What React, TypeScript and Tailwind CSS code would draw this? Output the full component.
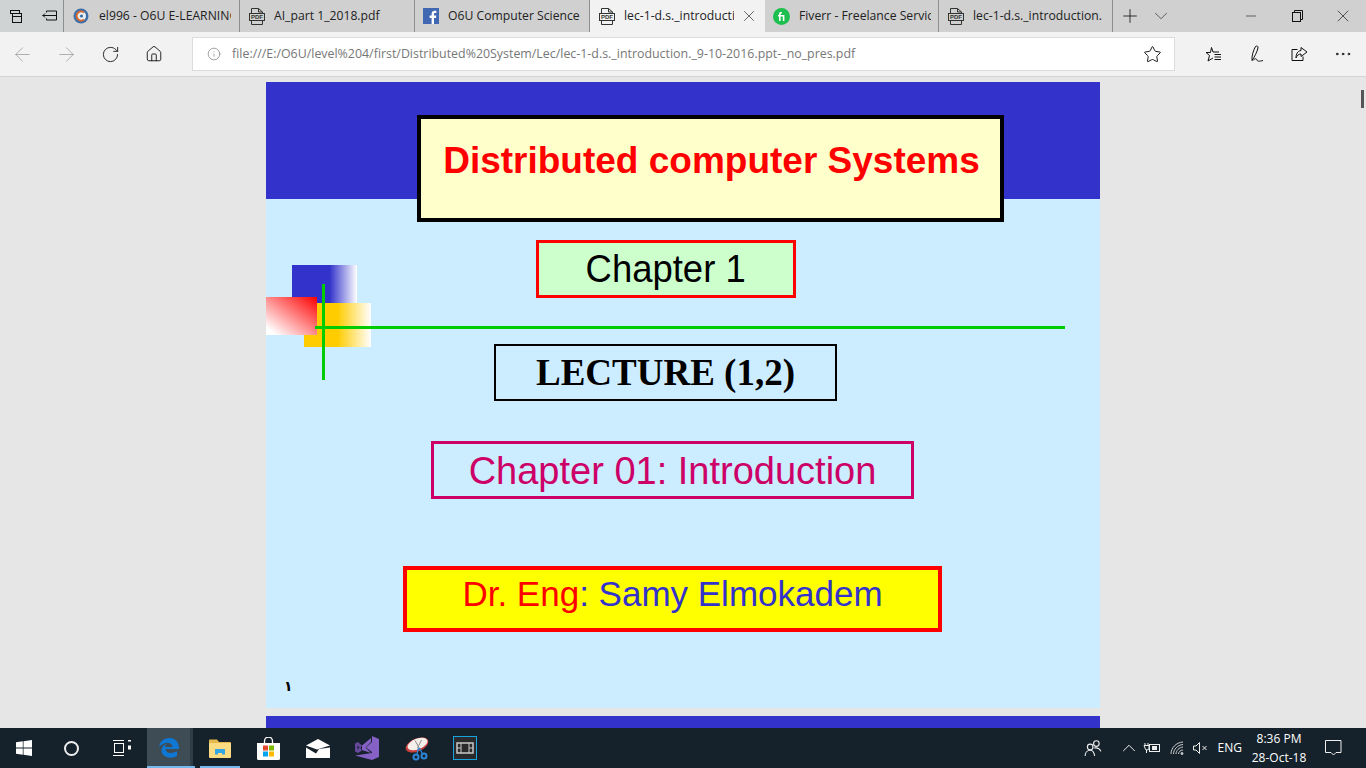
import { ChevronDown, ChevronUp, Home, Info, Minus, MoreHorizontal, Plus, RotateCw, Star, X, ArrowLeft, ArrowRight } from 'lucide-react';

const UI_FONT = "font-['Open_Sans','Noto_Sans',sans-serif]";

function PdfIcon() {
  return (
    <svg width="16" height="17" viewBox="0 0 16 17" className="shrink-0" fill="none" stroke="#333" strokeWidth="1">
      <path d="M2.500 5.500V.5h7l4 3.500v1.500M9.500.5V4h4" />
      <path d="M2.500 12.500v4h11v-4" />
      <rect x="0.500" y="5.500" width="15" height="7" />
      <text x="8" y="11" textAnchor="middle" fontSize="6" fontWeight="700" fill="#333" stroke="none" fontFamily="Liberation Sans, sans-serif">PDF</text>
    </svg>
  );
}

function OrbIcon() {
  return (
    <svg width="16" height="16" viewBox="0 0 16 16" className="shrink-0">
      <circle cx="8" cy="8" r="7.500" fill="#3d6ea8" />
      <circle cx="8" cy="8" r="5" fill="#e8eef4" />
      <path d="M11 4.500A4.500 4.500 0 1 0 11 11.500" fill="none" stroke="#d9662b" strokeWidth="2" />
      <circle cx="8.500" cy="8" r="1.600" fill="#3d6ea8" />
    </svg>
  );
}

function FacebookIcon() {
  return (
    <svg width="16" height="16" viewBox="0 0 16 16" className="shrink-0">
      <rect width="16" height="16" fill="#4267b2" />
      <path d="M11 16v-6h2l.3-2.400H11V6.200c0-.7.2-1.200 1.200-1.200h1.200V2.900c-.2 0-1-.1-1.800-.1-1.800 0-3 1.100-3 3.100v1.700h-2V10h2v6z" fill="#fff" />
    </svg>
  );
}

function FiverrIcon() {
  return (
    <svg width="17" height="17" viewBox="0 0 17 17" className="shrink-0">
      <circle cx="8.500" cy="8.500" r="8.500" fill="#1dbf4f" />
      <path d="M5 7h1V5.800C6 4.500 6.800 4 8 4h.8v1.500H8.200c-.4 0-.6.2-.6.500V7h3.800v6H9.800V8.500H7.600V13H6V8.500H5z" fill="#fff" />
    </svg>
  );
}

const TABS = [
  { title: 'el996 - O6U E-LEARNING', icon: <OrbIcon />, w: 'w-[176px]', gap: 'pl-[9px] gap-[10px]' },
  { title: 'AI_part 1_2018.pdf', icon: <PdfIcon />, w: 'w-[175px]', gap: 'pl-[9px] gap-[9px]' },
  { title: 'O6U Computer Science', icon: <FacebookIcon />, w: 'w-[175px]', gap: 'pl-[8px] gap-[9px]' },
  { title: 'lec-1-d.s._introduction._9-10', icon: <PdfIcon />, w: 'w-[175px]', gap: 'pl-[9px] gap-[9px]', active: true },
  { title: 'Fiverr - Freelance Services', icon: <FiverrIcon />, w: 'w-[174px]', gap: 'pl-[8px] gap-[9px]' },
  { title: 'lec-1-d.s._introduction.', icon: <PdfIcon />, w: 'w-[174px]', gap: 'pl-[9px] gap-[9px]' },
];

function TabStrip() {
  return (
    <div className="flex h-[32px] bg-[#d0d0d0]">
      <div className="flex w-[64px] items-center border-r border-[#8e8e8e] bg-[#cfd3d3] pl-[9px] gap-[18px]">
        <svg width="15" height="15" viewBox="0 0 15 15" fill="none" stroke="#111" strokeWidth="1">
          <rect x="1.500" y="1.500" width="9" height="3" />
          <rect x="3.500" y="4.500" width="9" height="3" fill="#cfd3d3" />
          <rect x="3.500" y="7.500" width="9" height="6" fill="#cfd3d3" />
        </svg>
        <svg width="16" height="14" viewBox="0 0 16 14" fill="none" stroke="#111" strokeWidth="1">
          <path d="M4.500 3.500v-1.500h10v9h-10V9.500" />
          <path d="M.5 6.500h7M3 4.500l-2 2 2 2M4.500 6.500h10" />
        </svg>
      </div>
      {TABS.map(t => (
        <div
          key={t.title}
          className={`flex ${t.w} items-center overflow-hidden ${t.gap} ${t.active ? 'bg-[#f2f2f2]' : 'border-r border-[#8e8e8e]'} ${UI_FONT} text-[12.200px] text-[#222]`}
        >
          {t.icon}
          <span className={`${t.active ? 'w-[110px]' : 'w-[132px]'} shrink-0 overflow-hidden whitespace-nowrap`}>{t.title}</span>
          {t.active && <X size={18} strokeWidth={0.900} className="-ml-[3px] shrink-0" />}
        </div>
      ))}
      <div className="flex w-[60px] items-center pl-[6px] gap-[9px]">
        <Plus size={22} strokeWidth={0.900} color="#111" />
        <ChevronDown size={22} strokeWidth={0.800} color="#333" />
      </div>
      <div className="ml-auto flex items-center">
        <div className="flex w-[46px] justify-center"><Minus size={16} strokeWidth={0.900} color="#111" /></div>
        <div className="flex w-[46px] justify-center">
          <svg width="11" height="12" viewBox="0 0 11 12" fill="none" stroke="#111" strokeWidth="1">
            <rect x="0.500" y="2.500" width="8" height="9" />
            <path d="M2.500 2.500v-2h8v9h-2" />
          </svg>
        </div>
        <div className="flex w-[46px] justify-center"><X size={20} strokeWidth={0.800} color="#111" /></div>
      </div>
    </div>
  );
}

function ToolBar() {
  return (
    <div className="flex h-[45px] items-center border-b border-[#d4d4d4] bg-[#f2f2f2]">
      <div className="flex w-[192px] items-center pl-[11px]">
        <ArrowLeft size={23} strokeWidth={0.800} color="#999" />
        <ArrowRight size={23} strokeWidth={0.800} color="#999" className="ml-[21px]" />
        <RotateCw size={19} strokeWidth={1.100} color="#111" className="ml-[23px]" />
        <Home size={18} strokeWidth={1.200} color="#111" className="ml-[25px]" />
      </div>
      <div className={`flex h-[34px] w-[983px] items-center border border-[#dcdcdc] bg-white pl-[14px] ${UI_FONT} text-[12.400px] text-[#777]`}>
        <Info size={14} strokeWidth={1} color="#666" className="shrink-0" />
        <span className="ml-[11px] whitespace-nowrap">file:///E:/O6U/level%204/first/Distributed%20System/Lec/lec-1-d.s._introduction._9-10-2016.ppt-_no_pres.pdf</span>
        <Star size={19} strokeWidth={1.200} color="#111" className="ml-auto mr-[12px] shrink-0" />
      </div>
      <div className="flex flex-1 items-center pl-[30px]">
        <svg width="17" height="17" viewBox="0 0 17 17" fill="none" stroke="#111" strokeWidth="1">
          <path d="M6.500 1.500L8 6h6M1 6.500h4.500l1-5M1 6.500l3.500 3L3 15l5-3" />
          <path d="M9.500 8.500h6.500M9.500 11h6.500M9.500 13.500h6.500" />
        </svg>
        <svg width="17" height="18" viewBox="0 0 17 18" fill="none" stroke="#111" strokeWidth="1" className="ml-[27px]">
          <path d="M6.500 1.500C4.500 5 2.500 11 3 15.500 5.500 12 8 7 9 3 9.500 1 7.500.5 6.500 1.500zM4 15.500c2-2.500 3.500-2 4-.5s2 1.500 6 .5" />
        </svg>
        <svg width="17" height="17" viewBox="0 0 17 17" fill="none" stroke="#111" strokeWidth="1" className="ml-[25px]">
          <path d="M6.500 3.500h-5.500v11h11v-4" />
          <path d="M10 1.500l6 4.500-6 4.500V8C7.500 8 6 9.500 5 12c0-4 1.500-7 5-7.500z" />
        </svg>
        <MoreHorizontal size={20} strokeWidth={1.200} color="#111" className="ml-[25px]" />
      </div>
    </div>
  );
}

function SlideBox({ className, children }: { className: string; children: React.ReactNode }) {
  return <div className={`absolute flex items-center justify-center whitespace-nowrap ${className}`}>{children}</div>;
}

function Slide() {
  return (
    <div className="relative h-[626px] w-[834px] shrink-0 overflow-hidden bg-[#ccecff] font-['Liberation_Sans',sans-serif]">
      <div className="h-[117px] bg-[#3333cc]" />

      <SlideBox className="left-[151px] top-[33px] h-[107px] w-[587px] border-[4px] border-black bg-[#ffffcc] pb-[16px] pl-[2px] text-[37px] font-bold text-[#ff0000]">
        Distributed computer Systems
      </SlideBox>
      <SlideBox className="left-[270px] top-[158px] h-[58px] w-[260px] border-[3px] border-[#ff0000] bg-[#ccffcc] text-[39px] text-black">
        <span className="inline-block scale-x-[0.935]">Chapter 1</span>
      </SlideBox>

      {/* corner decoration */}
      <div className="absolute left-[26px] top-[183px] h-[38px] w-[65px] bg-[linear-gradient(90deg,#3333cc_0%,#3333cc_58%,#ffffff_100%)]" />
      <div className="absolute left-[38px] top-[221px] h-[44px] w-[67px] bg-[linear-gradient(90deg,#ffcc00_0%,#ffcc00_50%,#ffffff_100%)]" />
      <div className="absolute left-0 top-[215px] h-[38px] w-[51px] bg-[linear-gradient(to_bottom_left,#ff0000,#ffffff_90%)]" />
      <div className="absolute left-[56px] top-[202px] h-[96px] w-[3px] bg-[#00cc00]" />
      <div className="absolute left-[49px] top-[244px] h-[3px] w-[750px] bg-[#00cc00]" />

      <SlideBox className="left-[228px] top-[262px] h-[57px] w-[343px] border-2 border-black font-['Liberation_Serif',serif] text-[37px] font-bold text-black">
        LECTURE (1,2)
      </SlideBox>
      <SlideBox className="left-[165px] top-[359px] h-[58px] w-[483px] border-[3px] border-[#cc0066] pt-[2px] text-[38px] text-[#cc0066]">
        Chapter 01: Introduction
      </SlideBox>
      <SlideBox className="left-[137px] top-[484px] h-[66px] w-[539px] border-[4px] border-[#ff0000] bg-[#ffff00] pb-[10px] text-[35px]">
        <span className="text-[#ff0000]">Dr. Eng</span>
        <span className="text-[#3333cc]">: Samy Elmokadem</span>
      </SlideBox>
      <span className="absolute left-[18px] top-[596px] font-['Noto_Sans','DejaVu_Sans',sans-serif] text-[14px] font-bold leading-4 text-black">١</span>
    </div>
  );
}

function PdfViewer() {
  return (
    <div className="relative flex h-[651px] flex-col items-center gap-[8px] overflow-hidden bg-[#e6e6e6] pt-[5px]">
      <Slide />
      <div className="h-[40px] w-[834px] shrink-0 bg-[#3333cc]" />
      <div className="absolute right-[2px] top-[13px] h-[18px] w-[3px] bg-[#555]" />
    </div>
  );
}

function WinLogo() {
  return (
    <svg width="16" height="16" viewBox="0 0 16 16" fill="#fff">
      <path d="M0 2.300l6.800-1v6.300H0zM7.500 1.200L16 0v7.600H7.500zM0 8.400h6.800v6.300l-6.800-1zM7.500 8.400H16V16l-8.500-1.200z" />
    </svg>
  );
}

function EdgeIcon() {
  return (
    <svg width="22" height="22" viewBox="0 0 22 22">
      <path d="M1 10C2 4 6.500 1 11.500 1 17.500 1 21 5 21 12H7.500c.3 3.800 5.500 5.500 11.500 2.300v4.700C12.500 22.500 3 20.500 3.500 13c.2-3 2.500-5.500 6-6.500-1.500 1-2.500 2.300-2.500 3.500h7.500c0-3.500-5-5.500-8.500-3.500C4 7.500 2.500 8.500 1 10z" fill="#0f78d4" />
    </svg>
  );
}

function FolderIcon() {
  return (
    <svg width="22" height="19" viewBox="0 0 22 19">
      <path d="M0 1.500C0 1 .5.500 1 .500h7l2 2.500h11c.5 0 1 .5 1 1v3H0z" fill="#e6b94f" />
      <rect y="4" width="22" height="15" rx="1" fill="#fbdc83" />
      <rect x="6" y="10" width="10" height="5.500" fill="#33a6e3" />
      <rect x="9" y="14" width="4" height="5" fill="#fbdc83" />
    </svg>
  );
}

function StoreIcon() {
  return (
    <svg width="23" height="23" viewBox="0 0 23 23">
      <path d="M7.500 6V4a4 4 0 0 1 8 0v2" fill="none" stroke="#fff" strokeWidth="1.300" />
      <path d="M0 6h23v15.500a1.500 1.500 0 0 1-1.500 1.500h-20A1.500 1.500 0 0 1 0 21.500z" fill="#fff" />
      <rect x="6" y="8.500" width="5" height="5" fill="#e2492f" />
      <rect x="12" y="8.500" width="5" height="5" fill="#7fba00" />
      <rect x="6" y="14.500" width="5" height="5" fill="#00a4ef" />
      <rect x="12" y="14.500" width="5" height="5" fill="#ffb900" />
    </svg>
  );
}

function MailIcon() {
  return (
    <svg width="24" height="19" viewBox="0 0 24 19">
      <path d="M0 6.500L12 0l12 6.500L11 10.500z" fill="#fff" />
      <path d="M0 8.500l10 6 3-4.500 11-1.500V19H0z" fill="#fff" />
    </svg>
  );
}

function VsIcon() {
  return (
    <svg width="24" height="24" viewBox="0 0 24 24">
      <path d="M17 0l7 3v18l-7 3L0 19.500 17 17zM17 6l-6 5.500L17 16z" fill="#8661c5" />
      <path d="M0 7.500L3 6l4 3.500-1.500 2.500L7 14.500 3 17l-3-1.500zM2.500 9.500v4l2-2z" fill="#68489c" />
      <path d="M7 9.500l9-7.500v4l-5.500 5.500L16 17l-9-3z" fill="#8661c5" />
    </svg>
  );
}

function PaintIcon() {
  return (
    <svg width="24" height="25" viewBox="0 0 24 25">
      <ellipse cx="12" cy="9" rx="12" ry="6.500" transform="rotate(-22 12 9)" fill="#c9403f" />
      <ellipse cx="12.500" cy="8" rx="10.500" ry="5.300" transform="rotate(-22 12.500 8)" fill="#f4efea" />
      <path d="M10 4.500l4.500 8M16.500 4l-4 8" stroke="#8c8c8c" strokeWidth="1" />
      <path d="M14.500 12l3 6M13.500 12l-1.500 6" stroke="#2f86d8" strokeWidth="1.300" />
      <circle cx="19" cy="20" r="2.500" fill="none" stroke="#2f86d8" strokeWidth="2" />
      <circle cx="11" cy="21" r="2.500" fill="none" stroke="#2f86d8" strokeWidth="2" />
    </svg>
  );
}

function FilmIcon() {
  return (
    <svg width="24" height="24" viewBox="0 0 24 24">
      <rect x="0.500" y="0.500" width="23" height="23" fill="#2a2a2a" stroke="#19a3e0" />
      <rect x="4" y="7" width="16" height="10" fill="none" stroke="#c9c9c9" strokeWidth="1.500" />
      <path d="M8 7v10M16 7v10M4 12h4M16 12h4" stroke="#c9c9c9" />
    </svg>
  );
}

function TaskBar() {
  return (
    <div className={`flex h-[40px] items-center bg-[#15222b] ${UI_FONT} text-white`}>
      <div className="flex w-[47px] justify-center"><WinLogo /></div>
      <div className="flex w-[49px] justify-center">
        <div className="h-[15px] w-[15px] rounded-full border-2 border-[#eee]" />
      </div>
      <div className="flex w-[51px] justify-center">
        <svg width="18" height="16" viewBox="0 0 18 16" fill="none" stroke="#fff" strokeWidth="1">
          <path d="M0 .500h11M0 15.500h11" />
          <rect x="1.500" y="3.500" width="9" height="9" />
          <path d="M15 .500h3M15 6.500h3M15 8.500h3" strokeWidth="2" />
        </svg>
      </div>
      <div className="relative flex h-full w-[46px] items-center justify-center border-r-[3px] border-[#2f3d46] bg-[#3e4c55]">
        <EdgeIcon />
        <div className="absolute bottom-0 left-0 h-[2px] w-[48px] bg-[#76b9ed]" />
      </div>
      <div className="relative ml-[7px] flex h-full w-[40px] items-center justify-center">
        <FolderIcon />
        <div className="absolute bottom-0 left-0 h-[2px] w-[40px] bg-[#76b9ed]" />
      </div>
      <div className="ml-[6px] flex w-[44px] justify-center"><StoreIcon /></div>
      <div className="ml-[4px] flex w-[48px] justify-center"><MailIcon /></div>
      <div className="flex w-[50px] justify-center"><VsIcon /></div>
      <div className="flex w-[50px] justify-center"><PaintIcon /></div>
      <div className="flex w-[46px] justify-center"><FilmIcon /></div>

      <div className="ml-auto flex items-center">
        <svg width="18" height="18" viewBox="0 0 16 16" fill="none" stroke="#eee" strokeWidth="1">
          <circle cx="11" cy="4" r="2.500" />
          <circle cx="5.500" cy="7" r="2.500" />
          <path d="M1 15c0-3 2-5 4.500-5S9 12 9.500 15M9 8c3-.5 5 .5 6 3" />
        </svg>
        <ChevronUp size={22} strokeWidth={1} className="ml-[16px]" />
        <svg width="17" height="12" viewBox="0 0 17 12" fill="none" stroke="#eee" strokeWidth="1" className="ml-[3px]">
          <rect x="6.500" y="2.500" width="10" height="7" />
          <rect x="9" y="4" width="5" height="4" fill="#eee" stroke="none" />
          <path d="M1 3.500h5v2.500a2 2 0 0 1-4 0zM2 1v2.500M5 1v2.500M3.500 8v3" />
        </svg>
        <svg width="14" height="14" viewBox="0 0 14 14" fill="none" stroke="#ccc" strokeWidth="1" className="ml-[10px]">
          <path d="M1 13C1 7 6 1.500 13 1M3.500 13C3.500 8.500 7.500 4 13 3.500M6 13c0-3.500 3-6.500 7-7M8.500 13c0-2 2-4 4.500-4" />
          <circle cx="12" cy="12.500" r="1" fill="#ccc" />
        </svg>
        <svg width="15" height="12" viewBox="0 0 15 12" fill="none" stroke="#eee" strokeWidth="1" className="ml-[9px]">
          <path d="M.5 4v4H3l3.500 3.500V.5L3 4z" />
          <path d="M9.500 4l4 4M13.500 4l-4 4" />
        </svg>
        <span className="ml-[10px] text-[12px]">ENG</span>
        <div className="ml-[9px] flex w-[56px] flex-col items-center text-[12px] leading-[19px]">
          <span>8:36 PM</span>
          <span className="whitespace-nowrap">28-Oct-18</span>
        </div>
        <svg width="17" height="16" viewBox="0 0 17 16" fill="none" stroke="#eee" strokeWidth="1" className="ml-[18px] mr-[24px]">
          <path d="M.5.500h15.500v12h-5l-2.500 2.500-2.500-2.500H.5z" />
        </svg>
      </div>
    </div>
  );
}

export default function App() {
  return (
    <div className="flex h-[768px] w-[1366px] flex-col overflow-hidden">
      <TabStrip />
      <ToolBar />
      <PdfViewer />
      <TaskBar />
    </div>
  );
}
